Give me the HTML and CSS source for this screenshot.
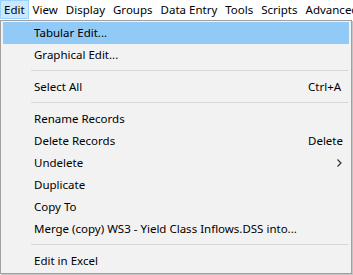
FILE: index.html
```html
<!DOCTYPE html>
<html lang="en">
<head>
    <meta charset="UTF-8">
    <title>Edit menu</title>
    <link rel="stylesheet" href="styles.css">
</head>
<body>
    <div class="window">
        <!-- Menu bar -->
        <div class="menubar">
            <span class="menubar-item active">Edit</span>
            <span class="menubar-item">View</span>
            <span class="menubar-item">Display</span>
            <span class="menubar-item">Groups</span>
            <span class="menubar-item">Data Entry</span>
            <span class="menubar-item">Tools</span>
            <span class="menubar-item">Scripts</span>
            <span class="menubar-item">Advanced</span>
        </div>

        <!-- Edit dropdown -->
        <div class="dropdown">
            <div class="item hover"><span class="label">Tabular Edit...</span></div>
            <div class="item"><span class="label">Graphical Edit...</span></div>
            <div class="separator"></div>
            <div class="item"><span class="label">Select All</span><span class="shortcut">Ctrl+A</span></div>
            <div class="separator"></div>
            <div class="item"><span class="label">Rename Records</span></div>
            <div class="item"><span class="label">Delete Records</span><span class="shortcut">Delete</span></div>
            <div class="item">
                <span class="label">Undelete</span>
                <svg class="submenu-arrow" width="5" height="8" viewBox="0 0 5 8">
                    <path d="M0.5 0.5 L4 4 L0.5 7.5" fill="none" stroke="#333" stroke-width="1.2"/>
                </svg>
            </div>
            <div class="item"><span class="label">Duplicate</span></div>
            <div class="item"><span class="label">Copy To</span></div>
            <div class="item"><span class="label">Merge (copy) WS3 - Yield Class Inflows.DSS into...</span></div>
            <div class="separator"></div>
            <div class="item"><span class="label">Edit in Excel</span></div>
        </div>
    </div>
</body>
</html>
```

FILE: styles.css
```css
body { margin: 0; font-family: "Noto Sans", "Open Sans", sans-serif; font-size: 11.5px; color: #000; background: #fff; }
.window { width: 353px; height: 275px; overflow: hidden; }

.menubar { display: flex; height: 20px; background: #fff; white-space: nowrap; overflow: hidden; }
.menubar-item { height: 19px; line-height: 17px; padding: 0 3px; border: 1px solid transparent; box-sizing: border-box; flex-shrink: 0; }
.menubar-item.active { background: #cce8ff; border-color: #99d1ff; }

.dropdown { width: 352px; height: 254px; box-sizing: border-box; border: 1px solid #a0a0a0; box-shadow: 1px 1px 0 #c4c4c4; background: #f2f2f2; padding: 1px 2px 2px; }
.item { display: grid; grid-template-columns: 305px 1fr; align-items: center; height: 22px; line-height: 22px; white-space: nowrap; }
.item.hover { background: #91c9f7; }
.label { padding-left: 31px; }
.shortcut { justify-self: start; }
.submenu-arrow { justify-self: end; margin-right: 7px; }
.separator { height: 10px; box-sizing: border-box; padding-top: 4px; margin: 0 1px 0 28px; }
.separator::before { content: ""; display: block; height: 1px; background: #d7d7d7; }
```
